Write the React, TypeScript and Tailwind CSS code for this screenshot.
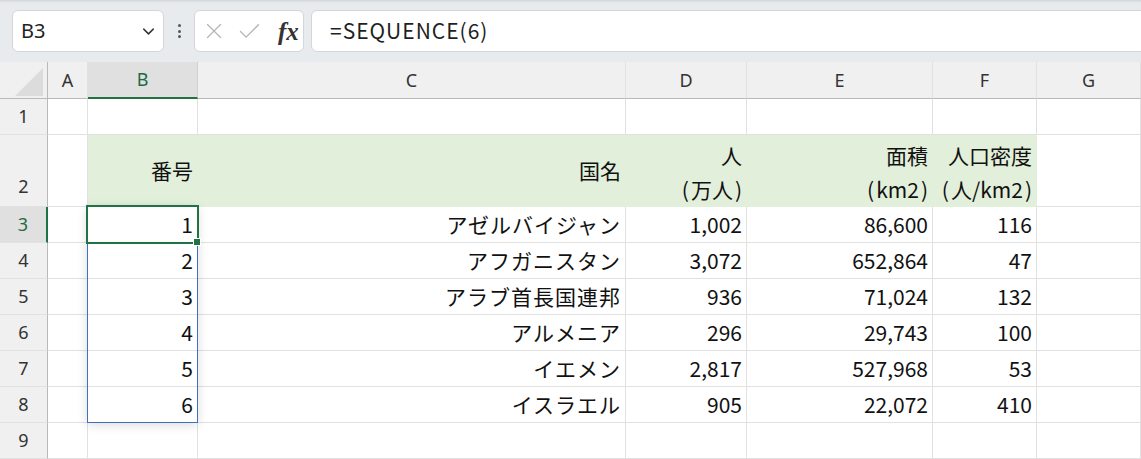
import React from 'react';
import { ChevronDown, X, Check } from 'lucide-react';

const cols = ['A', 'B', 'C', 'D', 'E', 'F', 'G'];

const rows = [
  { no: '1', name: 'アゼルバイジャン', pop: '1,002', area: '86,600', dens: '116' },
  { no: '2', name: 'アフガニスタン', pop: '3,072', area: '652,864', dens: '47' },
  { no: '3', name: 'アラブ首長国連邦', pop: '936', area: '71,024', dens: '132' },
  { no: '4', name: 'アルメニア', pop: '296', area: '29,743', dens: '100' },
  { no: '5', name: 'イエメン', pop: '2,817', area: '527,968', dens: '53' },
  { no: '6', name: 'イスラエル', pop: '905', area: '22,072', dens: '410' },
];

const cell = 'border-r border-b border-[#e1e1e1] flex items-center justify-end pr-[4px] pt-[1px] text-[#111]';
const hdr = 'border-r border-b border-[#e1e1e1] flex items-center justify-center text-[#333] text-[18px] font-["Noto_Sans",sans-serif] bg-[#f0f0f0]';
const green = 'bg-[#e2efda] border-b border-r border-[#e2efda] flex items-center justify-end pr-[4px] text-[#111]';

const FormulaBar: React.FC = () => (
  <div className="h-[62px] bg-[#e8ebee] flex items-center pl-[12px] shadow-[inset_0_3px_3px_-2px_rgba(0,0,0,0.12)] overflow-hidden">
    <div className="shrink-0 w-[152px] h-[42px] bg-white border border-[#d4d6d9] rounded-[6px] flex items-center justify-between pl-[8px] pr-[5px]">
      <span className="text-[20px] text-[#222] font-['Noto_Sans',sans-serif]">B3</span>
      <ChevronDown size={19} strokeWidth={1.8} color="#333" />
    </div>
    <div className="shrink-0 w-[30px] flex flex-col items-center gap-[2.5px]">
      <span className="w-[3px] h-[3px] rounded-full bg-[#555]" />
      <span className="w-[3px] h-[3px] rounded-full bg-[#555]" />
      <span className="w-[3px] h-[3px] rounded-full bg-[#555]" />
    </div>
    <div className="shrink-0 w-[110px] h-[42px] bg-white border border-[#d4d6d9] rounded-[6px] flex items-center pl-[6px] gap-[9px]">
      <X size={26} strokeWidth={1.2} color="#b5b5b5" />
      <Check size={27} strokeWidth={1.2} color="#b5b5b5" />
      <span className="ml-[6px] text-[25px] italic font-bold text-[#333] font-['Liberation_Serif',serif] leading-none">fx</span>
    </div>
    <div className="shrink-0 ml-[7px] w-[860px] h-[42px] bg-white border border-[#d4d6d9] rounded-[6px] flex items-center pl-[18px]">
      <span className="text-[21px] tracking-[1px] text-[#1f1f1f] font-['Noto_Sans_CJK_JP',sans-serif]">=SEQUENCE(6)</span>
    </div>
  </div>
);

// unit line like "(万人)" with a little gap before the opening paren
const Unit: React.FC<{ text: string }> = ({ text }) => (
  <span className="pl-[8px]">
    (<span className="px-[2px]">{text}</span>)
  </span>
);

const App: React.FC = () => {
  return (
    <div className="w-[1141px] h-[459px] overflow-hidden bg-white font-['Noto_Sans_CJK_JP',sans-serif] text-[21px]">
      <FormulaBar />
      <div className="relative">
        <div className="grid grid-cols-[48px_40px_110px_428px_121px_186px_104px_104px] grid-rows-[37px_36px_72px_36px_36px_36px_36px_36px_36px_36px]">
          {/* header row */}
          <div className="bg-[#f0f0f0] border-r border-b border-[#b9b9b9] flex items-end justify-end pr-[4px] pb-[2px]">
            <svg width="28" height="28" viewBox="0 0 28 28">
              <polygon points="0,28 28,0 28,28" fill="#dcdcdc" />
            </svg>
          </div>
          {cols.map((c) =>
            c === 'B' ? (
              <div key={c} className="border-r border-[#d0d0d0] border-b-2 border-b-[#217346] bg-[#e0e0e0] flex items-center justify-center text-[#1e6b43] text-[18px] font-['Noto_Sans',sans-serif]">
                {c}
              </div>
            ) : (
              <div key={c} className={hdr + ' !border-b-[#b9b9b9]'}>
                {c}
              </div>
            )
          )}

          {/* row 1 */}
          <div className={hdr + ' !border-r-[#b9b9b9]'}>1</div>
          {cols.map((c) => (
            <div key={c} className={cell} />
          ))}

          {/* row 2 */}
          <div className={hdr + ' !border-r-[#b9b9b9] items-end pb-[6px]'}>2</div>
          <div className={cell} />
          <div className={green + ' justify-center'}>番号</div>
          <div className={green}>国名</div>
          <div className={green + ' flex-col items-end justify-center leading-[34px]'}>
            <span>人</span>
            <Unit text="万人" />
          </div>
          <div className={green + ' flex-col items-end justify-center leading-[34px]'}>
            <span>面積</span>
            <Unit text="km2" />
          </div>
          <div className={green + ' flex-col items-end justify-center leading-[34px]'}>
            <span>人口密度</span>
            <Unit text="人/km2" />
          </div>
          <div className={cell} />

          {/* data rows */}
          {rows.map((r, i) => (
            <React.Fragment key={r.no}>
              {i === 0 ? (
                <div className="border-b border-[#e1e1e1] border-r-2 border-r-[#217346] bg-[#e0e0e0] flex items-center justify-center text-[#1e6b43] text-[18px] font-['Noto_Sans',sans-serif]">
                  3
                </div>
              ) : (
                <div className={hdr + ' !border-r-[#b9b9b9]'}>{i + 3}</div>
              )}
              <div className={cell} />
              <div className={cell}>{r.no}</div>
              <div className={cell + ' tracking-[1px]'}>{r.name}</div>
              <div className={cell}>{r.pop}</div>
              <div className={cell}>{r.area}</div>
              <div className={cell}>{r.dens}</div>
              <div className={cell} />
            </React.Fragment>
          ))}

          {/* row 9 */}
          <div className={hdr + ' !border-r-[#b9b9b9]'}>9</div>
          {cols.map((c) => (
            <div key={c} className={cell} />
          ))}
        </div>

        {/* spill range */}
        <div className="absolute left-[87px] top-[144px] w-[111px] h-[217px] border border-[#3f6fc6] shadow-[0_2px_10px_rgba(0,0,0,0.14)] pointer-events-none" />
        {/* active cell */}
        <div className="absolute left-[86px] top-[143px] w-[113px] h-[39px] border-2 border-[#217346] pointer-events-none" />
        <div className="absolute left-[193px] top-[176px] w-[8px] h-[8px] bg-[#217346] border border-white" />
      </div>
    </div>
  );
};

export default App;
